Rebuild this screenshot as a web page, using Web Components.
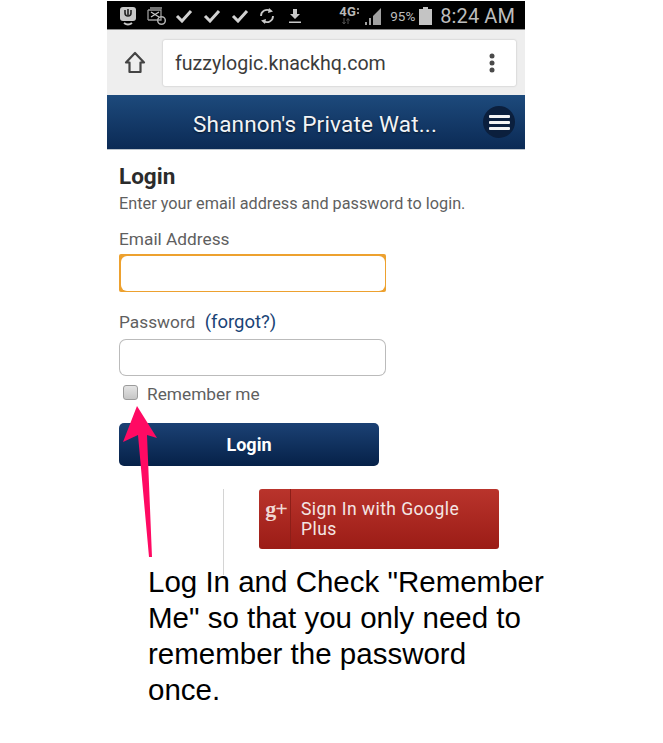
<!DOCTYPE html>
<html>
<head>
<meta charset="utf-8">
<title>Login</title>
<style>
  html, body { margin: 0; padding: 0; background: #fff; }
  body { font-family: Roboto, sans-serif; width: 663px; height: 743px; overflow: hidden; }
</style>
</head>
<body>
<login-shot></login-shot>

<script>
// Status bar along the top of the phone
class StatusBar extends HTMLElement {
  constructor() {
    super();
    this.attachShadow({ mode: 'open' });
  }
  connectedCallback() {
    const check = `<svg width="18" height="14" viewBox="0 0 18 14"><path d="M2 7l5 5 9-10" fill="none" stroke="#d2d2d2" stroke-width="3"/></svg>`;
    this.shadowRoot.innerHTML = `
      <style>
        :host { display: flex; align-items: center; height: 29px; margin-top: 1px; background: #000; color: #bdbdbd; padding: 1px 10px 0 12px; box-sizing: border-box; border-bottom: 1px solid #8a8a8a; }
        .left { display: flex; align-items: center; gap: 10px; flex: 1; }
        svg { display: block; }
        .right { display: flex; align-items: center; }
        .net { width: 24px; display: grid; grid-template-columns: auto 1fr; font-size: 13px; line-height: 11px; font-weight: 700; color: #b8b8b8; letter-spacing: .3px; }
        .net svg { margin-top: 1px; }
        .pct { font-size: 13.5px; margin: 0 4px 0 7px; }
        .time { font-size: 20px; margin-left: 8px; letter-spacing: .1px; }
      </style>
      <div class="left">
        <svg width="18" height="20" viewBox="0 0 18 20">
          <rect x="1" y="1" width="16" height="14" rx="3" fill="#c8c8c8"/>
          <path d="M5 17q4 3 8 0" fill="none" stroke="#c8c8c8" stroke-width="2"/>
          <path d="M6 4v3a3 3 0 0 0 6 0v-3M9 3v6" fill="none" stroke="#222" stroke-width="1.6"/>
        </svg>
        <svg width="19" height="20" viewBox="0 0 19 20" style="margin-right:-1px">
          <path d="M3 2h12M1 4v10M1 4h13v10h-13" fill="none" stroke="#9a9a9a" stroke-width="1.3"/>
          <path d="M4 6l8 5M12 6l-8 5" stroke="#c8c8c8" stroke-width="1.3"/>
          <circle cx="14.5" cy="14.5" r="3.8" fill="none" stroke="#b0b0b0" stroke-width="1.5"/>
        </svg>
        ${check}${check}${check}
        <svg width="16" height="18" viewBox="0 0 16 18">
          <path d="M2 9a6 6 0 0 1 9.5-5M14 9a6 6 0 0 1-9.5 5" fill="none" stroke="#c8c8c8" stroke-width="1.8"/>
          <path d="M10 1l4 3.5-5 1.5zM6 17l-4-3.5 5-1.5z" fill="#c8c8c8"/>
        </svg>
        <svg width="14" height="16" viewBox="0 0 14 16" style="margin-left:3px">
          <path d="M5 1h4v5h3l-5 5-5-5h3zM1 13.500h12v1.500h-12z" fill="#c8c8c8"/>
        </svg>
      </div>
      <div class="right">
        <div class="net">
          <span>4G</span>
          <svg width="4" height="9" viewBox="0 0 4 9" fill="#8f8f8f"><rect x="1" y="1" width="2" height="2"/><rect x="1" y="5" width="2" height="2"/></svg>
          <svg width="14" height="7" viewBox="0 0 14 7" style="grid-column:1/3"><path d="M5 0v5M3.500 4l1.500 2 1.500-2M9 6v-5M7.500 2.500l1.500-2 1.500 2" fill="none" stroke="#555" stroke-width="1"/></svg>
        </div>
        <svg width="20" height="20" viewBox="0 0 20 20">
          <path d="M2 19h2v-3h-2zM6 19h2v-7h-2zM10 19h8v-17l-8 8z" fill="#a0a0a0"/>
        </svg>
        <span class="pct">95%</span>
        <svg width="13" height="18" viewBox="0 0 13 18"><path d="M4 0h5v2h4v16h-13v-16h4z" fill="#c4c4c4"/></svg>
        <span class="time">8:24 AM</span>
      </div>
    `;
  }
}

// Browser address bar, home button + url box + overflow dots
class AddressBar extends HTMLElement {
  constructor() {
    super();
    this.attachShadow({ mode: 'open' });
  }
  connectedCallback() {
    const url = this.getAttribute('url') || '';
    this.shadowRoot.innerHTML = `
      <style>
        :host { display: flex; align-items: center; height: 65px; background: #eeeeee; padding: 1px 9px 0 17px; box-sizing: border-box; }
        svg { display: block; flex: none; }
        .box { flex: 1; height: 46px; margin-left: 17px; background: #fff; border-radius: 2px; box-shadow: 0 0 2px rgba(0,0,0,.25); display: flex; align-items: center; justify-content: space-between; padding: 0 21px 0 12px; color: #3b3b3b; font-size: 19.6px; }
      </style>
      <svg width="22" height="24" viewBox="0 0 22 24">
        <path d="M11 2L2 11.500h3.500V21h11v-9.500H20z" fill="none" stroke="#444" stroke-width="2.200" stroke-linejoin="round"/>
      </svg>
      <div class="box">
        <span>${url}</span>
        <svg width="6" height="20" viewBox="0 0 6 20" fill="#4a4a4a"><circle cx="3" cy="3" r="2.500"/><circle cx="3" cy="10" r="2.500"/><circle cx="3" cy="17" r="2.500"/></svg>
      </div>
    `;
  }
}

// Blue title bar of the app
class AppHeader extends HTMLElement {
  constructor() {
    super();
    this.attachShadow({ mode: 'open' });
  }
  connectedCallback() {
    this.shadowRoot.innerHTML = `
      <style>
        :host { display: flex; align-items: center; height: 55px; background: linear-gradient(#1d4a7c, #0b2a55); border-bottom: 1px solid #bcc4cc; box-sizing: border-box; padding: 0 10px 0 86px; color: #f2f4f6; }
        .title { flex: 1; font-size: 22.5px; text-shadow: 0 1px 2px rgba(0,0,0,.6); letter-spacing: .2px; padding-top: 4px; }
        .menu { width: 32px; height: 32px; border-radius: 50%; background: #0b1f3d; display: flex; flex-direction: column; align-items: center; justify-content: center; gap: 3px; }
        .menu i { display: block; width: 21px; height: 3px; border-radius: 1px; background: #f4f4f4; }
      </style>
      <span class="title"><slot></slot></span>
      <div class="menu"><i></i><i></i><i></i></div>
    `;
  }
}

// Text input look-alike
class FieldBox extends HTMLElement {
  constructor() {
    super();
    this.attachShadow({ mode: 'open' });
  }
  connectedCallback() {
    const focus = this.hasAttribute('focused');
    this.shadowRoot.innerHTML = `
      <style>
        :host { display: block; width: 267px; height: ${focus ? 38 : 37}px; box-sizing: border-box; background: ${focus ? '#eda12f' : '#bbb'}; border-radius: ${focus ? 2 : 7}px; padding: ${focus ? '1.5px' : '1px'}; }
        div { height: 100%; background: #fff; border-radius: 6px; }
      </style>
      <div></div>
    `;
  }
}

// Login form column
class LoginForm extends HTMLElement {
  constructor() {
    super();
    this.attachShadow({ mode: 'open' });
  }
  connectedCallback() {
    this.shadowRoot.innerHTML = `
      <style>
        :host { display: block; padding: 13px 0 0 12px; color: #5f5f5f; font-size: 17.300px; line-height: 20px; }
        h2 { margin: 0; font-size: 22.500px; line-height: 26px; font-weight: 700; color: #2b2b2b; }
        p { margin: 6px 0 0; font-size: 16.250px; line-height: 18px; }
        label { display: block; }
        .email { margin: 16px 0 5px; }
        .pw { margin: 20px 0 7px; }
        a { color: #1a4476; margin-left: 5px; text-decoration: none; font-size: 18.500px; }
        .remember { display: flex; align-items: center; margin-top: 8px; height: 20px; }
        .tick { width: 13px; height: 13px; margin: -4px 9px 0 4px; border-radius: 3px; border: 1px solid #9b9b9b; background: linear-gradient(#e4e4e4, #c6c6c6); }
        .btn { width: 260px; height: 43px; margin-top: 19px; box-sizing: border-box; border-radius: 5px; background: linear-gradient(#1b4174, #062148); color: #fff; font-weight: 700; font-size: 18px; display: flex; align-items: center; justify-content: center; }
      </style>
      <h2>Login</h2>
      <p>Enter your email address and password to login.</p>
      <label class="email">Email Address</label>
      <field-box focused></field-box>
      <label class="pw">Password <a>(forgot?)</a></label>
      <field-box></field-box>
      <div class="remember"><span class="tick"></span>Remember me</div>
      <div class="btn">Login</div>
    `;
  }
}

// Divider + red google button
class SsoPanel extends HTMLElement {
  constructor() {
    super();
    this.attachShadow({ mode: 'open' });
  }
  connectedCallback() {
    this.shadowRoot.innerHTML = `
      <style>
        :host { display: flex; align-items: flex-start; height: 86px; margin-top: 23px; padding-left: 116px; }
        .rule { width: 1px; height: 86px; background: #d4d4d4; }
        .gplus { width: 240px; height: 60px; margin-left: 35px; box-sizing: border-box; border-radius: 3px; background: linear-gradient(#b9342c, #9b1c16); color: #f4e6e4; display: flex; font-size: 17.500px; line-height: 20px; }
        .mark { width: 32px; border-right: 1px solid #8c1e18; font: 700 22px/30px "Liberation Serif", serif; text-align: center; padding: 5px 0 0 3px; letter-spacing: -1px; flex: none; box-sizing: border-box; color: #f0d8d4; }
        .label { padding: 10px 10px 0 10px; letter-spacing: .45px; }
      </style>
      <div class="rule"></div>
      <div class="gplus"><span class="mark">g+</span><span class="label">Sign In with Google Plus</span></div>
    `;
  }
}

// Caption written under the phone capture
class CalloutNote extends HTMLElement {
  constructor() {
    super();
    this.attachShadow({ mode: 'open' });
  }
  connectedCallback() {
    this.shadowRoot.innerHTML = `
      <style>
        :host { display: block; width: 397px; margin: -11px 0 0 148px; color: #000; font: 29.500px/36px "Liberation Sans", Arial, sans-serif; position: relative; }
      </style>
      <slot></slot>
    `;
  }
}

// The whole capture, pink arrow lies over the form
class LoginShot extends HTMLElement {
  constructor() {
    super();
    this.attachShadow({ mode: 'open' });
  }
  connectedCallback() {
    this.shadowRoot.innerHTML = `
      <style>
        :host { display: block; position: relative; width: 663px; height: 743px; }
        .phone { width: 418px; margin-left: 107px; }
        .arrow { position: absolute; left: 118px; top: 402px; }
      </style>
      <div class="phone">
        <status-bar></status-bar>
        <address-bar url="fuzzylogic.knackhq.com"></address-bar>
        <app-header>Shannon's Private Wat...</app-header>
        <login-form></login-form>
        <sso-panel></sso-panel>
      </div>
      <callout-note>Log In and Check "Remember Me" so that you only need to remember the password once.</callout-note>
      <svg class="arrow" width="42" height="156" viewBox="0 0 42 156">
        <path d="M19 3L39 35L29 32L34 154L31 154L20 32L5 39z" fill="#ff0a63"/>
      </svg>
    `;
  }
}

customElements.define('status-bar', StatusBar);
customElements.define('address-bar', AddressBar);
customElements.define('app-header', AppHeader);
customElements.define('field-box', FieldBox);
customElements.define('login-form', LoginForm);
customElements.define('sso-panel', SsoPanel);
customElements.define('callout-note', CalloutNote);
customElements.define('login-shot', LoginShot);
</script>
</body>
</html>
